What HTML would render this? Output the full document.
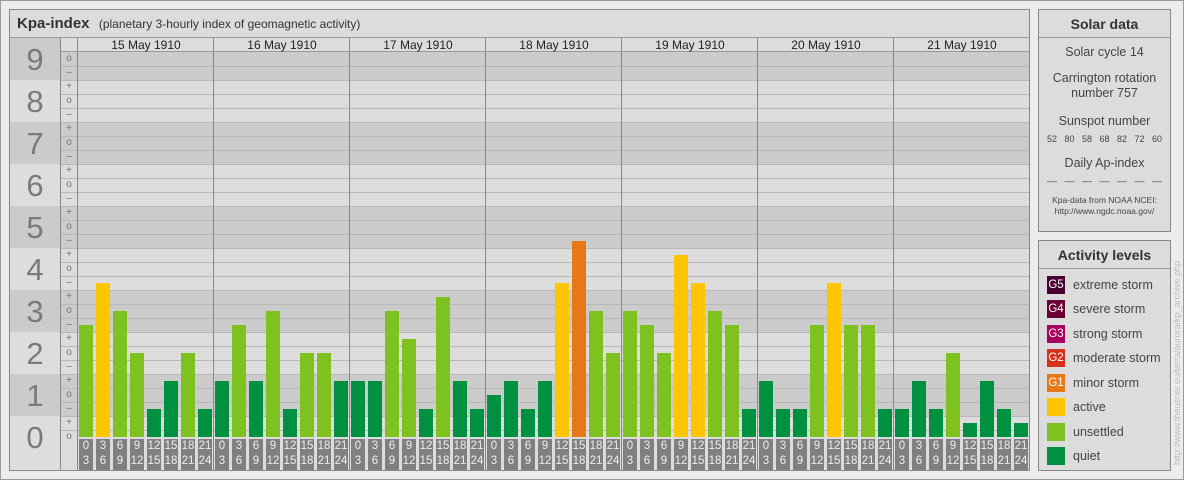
<!DOCTYPE html>
<html><head><meta charset="utf-8"><style>
*{margin:0;padding:0;box-sizing:border-box}
body{width:1184px;height:480px;position:relative;background:#ececec;font-family:"Liberation Sans",sans-serif;overflow:hidden}
.a{position:absolute}
.frame{left:0;top:0;width:1184px;height:480px;border:1px solid #999}
.panel{left:9px;top:9px;width:1021px;height:462px;border:1px solid #888;background:#dcdcdc}
.title{left:10px;top:10px;width:1019px;height:28px;border-bottom:1px solid #999;background:#dcdcdc;font-size:12px;color:#333;padding:5px 7px}
.title b{font-size:15px;margin-right:6px}
.band{position:absolute;left:0;width:100%}
.d{background:#cbcbcb}.l{background:#dddddd}
.num{position:absolute;left:10px;width:50px;text-align:center;font-size:31px;color:#7a7a7a}
.mk{position:absolute;left:61px;width:16px;text-align:center;font-size:10px;color:#777;height:14px;line-height:14px}
.day{position:absolute;top:52px;height:385px;width:136px;display:flex;align-items:flex-end;padding-left:1px;gap:3px}
.day i{display:block;width:14px}
.q{background:#009140}.u{background:#7dc21e}.y{background:#fbc500}.o{background:#e77817}
.lab{position:absolute;top:439px;width:136px;display:flex;padding-left:1px;gap:3px}
.lab span{width:14px;height:31px;background:#808080;color:#eee;font-size:11.5px;line-height:15px;text-align:center}
.dh{position:absolute;top:38px;width:136px;text-align:center;font-size:12px;color:#222;line-height:14px}
.vl{position:absolute;top:38px;width:1px;height:432px;background:#888}
.box{border:1px solid #888;background:#dcdcdc;left:1038px;width:133px}
.bh{height:28px;border-bottom:1px solid #999;text-align:center;font-weight:bold;font-size:14px;line-height:28px;color:#333}
.sd{text-align:center;color:#444;font-size:12.5px}
.it{position:absolute;left:8px;height:20px;font-size:12.5px;color:#444;line-height:20px}
.it s{display:inline-block;width:18px;height:18px;vertical-align:middle;text-decoration:none;color:#fff;font-size:11.5px;line-height:18px;text-align:center;margin-right:8px;margin-top:-2px}
</style></head><body>
<div class="a frame"></div>
<div class="a panel"></div>
<div class="a title"><b>Kpa-index</b> (planetary 3-hourly index of geomagnetic activity)</div>
<div class="a" style="left:10px;top:38px;width:1019px;height:432px;background:#dcdcdc"></div>
<div class="a" style="left:10px;top:52px;width:1019px;height:385px;overflow:hidden">
<div class="band d" style="top:0;height:28px"></div>
<div class="band l" style="top:28px;height:42px"></div>
<div class="band d" style="top:70px;height:42px"></div>
<div class="band l" style="top:112px;height:42px"></div>
<div class="band d" style="top:154px;height:42px"></div>
<div class="band l" style="top:196px;height:42px"></div>
<div class="band d" style="top:238px;height:42px"></div>
<div class="band l" style="top:280px;height:42px"></div>
<div class="band d" style="top:322px;height:42px"></div>
<div class="band l" style="top:364px;height:42px"></div>
<div class="band" style="left:51px;top:14px;height:371px;background:repeating-linear-gradient(to bottom,#b8b8b8 0,#b8b8b8 1px,transparent 1px,transparent 14px)"></div>
</div>
<div class="a d" style="left:10px;top:38px;width:50px;height:42px"></div>
<div class="a l" style="left:10px;top:80px;width:50px;height:42px"></div>
<div class="a d" style="left:10px;top:122px;width:50px;height:42px"></div>
<div class="a l" style="left:10px;top:164px;width:50px;height:42px"></div>
<div class="a d" style="left:10px;top:206px;width:50px;height:42px"></div>
<div class="a l" style="left:10px;top:248px;width:50px;height:42px"></div>
<div class="a d" style="left:10px;top:290px;width:50px;height:42px"></div>
<div class="a l" style="left:10px;top:332px;width:50px;height:42px"></div>
<div class="a d" style="left:10px;top:374px;width:50px;height:42px"></div>
<div class="a l" style="left:10px;top:416px;width:50px;height:54px"></div>
<div class="num" style="top:42px">9</div>
<div class="num" style="top:84px">8</div>
<div class="num" style="top:126px">7</div>
<div class="num" style="top:168px">6</div>
<div class="num" style="top:210px">5</div>
<div class="num" style="top:252px">4</div>
<div class="num" style="top:294px">3</div>
<div class="num" style="top:336px">2</div>
<div class="num" style="top:378px">1</div>
<div class="num" style="top:420px">0</div>
<div class="a" style="left:61px;top:38px;width:16px;height:14px;background:#dcdcdc"></div>
<div class="mk" style="top:52px">o</div><div class="mk" style="top:66px">–</div>
<div class="mk" style="top:80px">+</div><div class="mk" style="top:94px">o</div><div class="mk" style="top:108px">–</div>
<div class="mk" style="top:122px">+</div><div class="mk" style="top:136px">o</div><div class="mk" style="top:150px">–</div>
<div class="mk" style="top:164px">+</div><div class="mk" style="top:178px">o</div><div class="mk" style="top:192px">–</div>
<div class="mk" style="top:206px">+</div><div class="mk" style="top:220px">o</div><div class="mk" style="top:234px">–</div>
<div class="mk" style="top:248px">+</div><div class="mk" style="top:262px">o</div><div class="mk" style="top:276px">–</div>
<div class="mk" style="top:290px">+</div><div class="mk" style="top:304px">o</div><div class="mk" style="top:318px">–</div>
<div class="mk" style="top:332px">+</div><div class="mk" style="top:346px">o</div><div class="mk" style="top:360px">–</div>
<div class="mk" style="top:374px">+</div><div class="mk" style="top:388px">o</div><div class="mk" style="top:402px">–</div>
<div class="mk" style="top:416px">+</div><div class="mk" style="top:430px">o</div>
<div class="vl" style="left:60px"></div><div class="vl" style="left:77px"></div>
<div class="vl" style="left:213px"></div><div class="vl" style="left:349px"></div><div class="vl" style="left:485px"></div>
<div class="vl" style="left:621px"></div><div class="vl" style="left:757px"></div><div class="vl" style="left:893px"></div>
<div class="a" style="left:10px;top:37px;width:1019px;height:1px;background:#999"></div>
<div class="a" style="left:61px;top:51px;width:968px;height:1px;background:#999"></div>
<div class="dh" style="left:78px">15 May 1910</div>
<div class="dh" style="left:214px">16 May 1910</div>
<div class="dh" style="left:350px">17 May 1910</div>
<div class="dh" style="left:486px">18 May 1910</div>
<div class="dh" style="left:622px">19 May 1910</div>
<div class="dh" style="left:758px">20 May 1910</div>
<div class="dh" style="left:894px">21 May 1910</div>
<div class="day" style="left:78px"><i class="u" style="height:112px"></i><i class="y" style="height:154px"></i><i class="u" style="height:126px"></i><i class="u" style="height:84px"></i><i class="q" style="height:28px"></i><i class="q" style="height:56px"></i><i class="u" style="height:84px"></i><i class="q" style="height:28px"></i></div>
<div class="day" style="left:214px"><i class="q" style="height:56px"></i><i class="u" style="height:112px"></i><i class="q" style="height:56px"></i><i class="u" style="height:126px"></i><i class="q" style="height:28px"></i><i class="u" style="height:84px"></i><i class="u" style="height:84px"></i><i class="q" style="height:56px"></i></div>
<div class="day" style="left:350px"><i class="q" style="height:56px"></i><i class="q" style="height:56px"></i><i class="u" style="height:126px"></i><i class="u" style="height:98px"></i><i class="q" style="height:28px"></i><i class="u" style="height:140px"></i><i class="q" style="height:56px"></i><i class="q" style="height:28px"></i></div>
<div class="day" style="left:486px"><i class="q" style="height:42px"></i><i class="q" style="height:56px"></i><i class="q" style="height:28px"></i><i class="q" style="height:56px"></i><i class="y" style="height:154px"></i><i class="o" style="height:196px"></i><i class="u" style="height:126px"></i><i class="u" style="height:84px"></i></div>
<div class="day" style="left:622px"><i class="u" style="height:126px"></i><i class="u" style="height:112px"></i><i class="u" style="height:84px"></i><i class="y" style="height:182px"></i><i class="y" style="height:154px"></i><i class="u" style="height:126px"></i><i class="u" style="height:112px"></i><i class="q" style="height:28px"></i></div>
<div class="day" style="left:758px"><i class="q" style="height:56px"></i><i class="q" style="height:28px"></i><i class="q" style="height:28px"></i><i class="u" style="height:112px"></i><i class="y" style="height:154px"></i><i class="u" style="height:112px"></i><i class="u" style="height:112px"></i><i class="q" style="height:28px"></i></div>
<div class="day" style="left:894px"><i class="q" style="height:28px"></i><i class="q" style="height:56px"></i><i class="q" style="height:28px"></i><i class="u" style="height:84px"></i><i class="q" style="height:14px"></i><i class="q" style="height:56px"></i><i class="q" style="height:28px"></i><i class="q" style="height:14px"></i></div>
<div class="lab" style="left:78px"><span>0<br>3</span><span>3<br>6</span><span>6<br>9</span><span>9<br>12</span><span>12<br>15</span><span>15<br>18</span><span>18<br>21</span><span>21<br>24</span></div>
<div class="lab" style="left:214px"><span>0<br>3</span><span>3<br>6</span><span>6<br>9</span><span>9<br>12</span><span>12<br>15</span><span>15<br>18</span><span>18<br>21</span><span>21<br>24</span></div>
<div class="lab" style="left:350px"><span>0<br>3</span><span>3<br>6</span><span>6<br>9</span><span>9<br>12</span><span>12<br>15</span><span>15<br>18</span><span>18<br>21</span><span>21<br>24</span></div>
<div class="lab" style="left:486px"><span>0<br>3</span><span>3<br>6</span><span>6<br>9</span><span>9<br>12</span><span>12<br>15</span><span>15<br>18</span><span>18<br>21</span><span>21<br>24</span></div>
<div class="lab" style="left:622px"><span>0<br>3</span><span>3<br>6</span><span>6<br>9</span><span>9<br>12</span><span>12<br>15</span><span>15<br>18</span><span>18<br>21</span><span>21<br>24</span></div>
<div class="lab" style="left:758px"><span>0<br>3</span><span>3<br>6</span><span>6<br>9</span><span>9<br>12</span><span>12<br>15</span><span>15<br>18</span><span>18<br>21</span><span>21<br>24</span></div>
<div class="lab" style="left:894px"><span>0<br>3</span><span>3<br>6</span><span>6<br>9</span><span>9<br>12</span><span>12<br>15</span><span>15<br>18</span><span>18<br>21</span><span>21<br>24</span></div>
<div class="a box" style="top:9px;height:223px">
<div class="bh">Solar data</div>
<div class="sd" style="margin-top:7px">Solar cycle 14</div>
<div class="sd" style="margin-top:12px;line-height:15px">Carrington rotation<br>number 757</div>
<div class="sd" style="margin-top:13px">Sunspot number</div>
<div class="sd" style="font-size:9px;margin-top:6px;word-spacing:5px">52 80 58 68 82 72 60</div>
<div class="sd" style="margin-top:12px">Daily Ap-index</div>
<div class="sd" style="font-size:9px;margin-top:6px;word-spacing:5px">–– –– –– –– –– –– ––</div>
<div class="sd" style="font-size:8.5px;margin-top:9px;line-height:11px">Kpa-data from NOAA NCEI:<br>http://www.ngdc.noaa.gov/</div>
</div>
<div class="a box" style="top:240px;height:231px">
<div class="bh">Activity levels</div>
<div class="it" style="top:34px"><s style="background:#4a0030">G5</s>extreme storm</div>
<div class="it" style="top:58px"><s style="background:#6b0034">G4</s>severe storm</div>
<div class="it" style="top:83px"><s style="background:#a8005e">G3</s>strong storm</div>
<div class="it" style="top:107px"><s style="background:#d9301e">G2</s>moderate storm</div>
<div class="it" style="top:132px"><s style="background:#e77817">G1</s>minor storm</div>
<div class="it" style="top:156px"><s style="background:#fbc500"></s>active</div>
<div class="it" style="top:181px"><s style="background:#7dc21e"></s>unsettled</div>
<div class="it" style="top:205px"><s style="background:#009140"></s>quiet</div>
</div>
<div class="a" style="left:1172px;top:465px;width:220px;font-size:9px;color:#bbb;transform:rotate(-90deg);transform-origin:0 0;white-space:nowrap">http://www.theusner.eu/terra/aurora/kp_archive.php</div>
</body></html>
